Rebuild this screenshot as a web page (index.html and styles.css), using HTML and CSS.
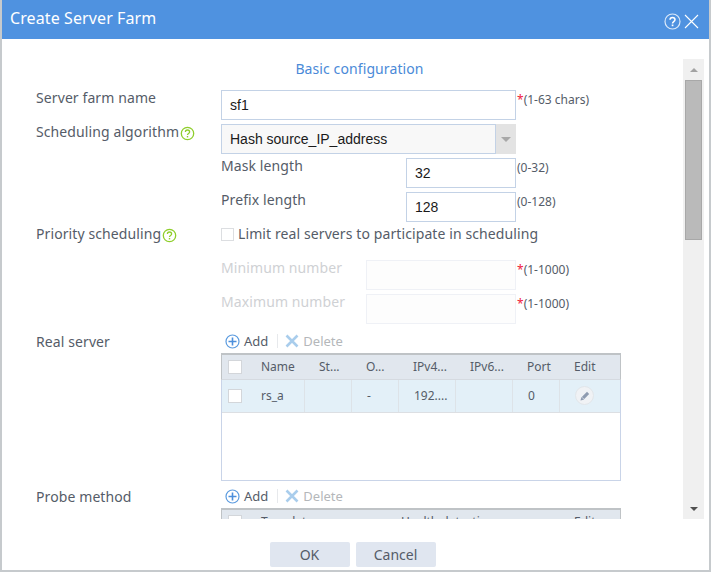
FILE: index.html
```html
<!DOCTYPE html>
<html lang="en">
<head>
<meta charset="utf-8">
<title>Create Server Farm</title>
<link rel="stylesheet" href="styles.css">
</head>
<body>
<div class="dialog">
  <header class="titlebar">
    <h1 class="title">Create Server Farm</h1>
    <div class="title-icons">
      <svg width="17" height="17" viewBox="0 0 17 17"><circle cx="8.5" cy="8.5" r="7.5" fill="none" stroke="#dbe9f9" stroke-width="1.2"/><path d="M6 6.8c0-3.2 5-3.2 5 0 0 1.900-2.500 1.900-2.500 3.800" fill="none" stroke="#fff" stroke-width="1.5"/><rect x="7.700" y="11.500" width="1.700" height="1.700" fill="#fff"/></svg>
      <svg width="15" height="15" viewBox="0 0 15 15"><path d="M1 1l13 13M14 1L1 14" stroke="#fff" stroke-width="1.1"/></svg>
    </div>
  </header>
  <div class="content">
    <div class="form">
      <div class="section">Basic configuration</div>
      <div class="row">
        <div class="label">Server farm name</div>
        <div class="input">sf1</div><div class="hint"><span class="req">*</span>(1-63 chars)</div>
      </div>
      <div class="row">
        <div class="label">Scheduling algorithm<svg class="help" width="15" height="15" viewBox="0 0 15 15"><circle cx="7.5" cy="7.5" r="6.2" fill="none" stroke="#8fce2c" stroke-width="1.3"/><path d="M5.4 6c0-2.700 4.200-2.700 4.200 0 0 1.600-2.100 1.500-2.100 3.100" fill="none" stroke="#8fce2c" stroke-width="1.300"/><rect x="6.800" y="10" width="1.400" height="1.400" fill="#8fce2c"/></svg></div>
        <div class="select"><div class="select-value">Hash source_IP_address</div><div class="select-btn"><span class="caret"></span></div></div>
      </div>
      <div class="row">
        <div class="sublabel sublabel-wide">Mask length</div>
        <div class="input narrow">32</div><div class="hint">(0-32)</div>
      </div>
      <div class="row">
        <div class="sublabel sublabel-wide">Prefix length</div>
        <div class="input narrow">128</div><div class="hint">(0-128)</div>
      </div>
      <div class="row">
        <div class="label">Priority scheduling<svg class="help" width="15" height="15" viewBox="0 0 15 15"><circle cx="7.5" cy="7.5" r="6.2" fill="none" stroke="#8fce2c" stroke-width="1.3"/><path d="M5.4 6c0-2.700 4.200-2.700 4.200 0 0 1.600-2.100 1.500-2.100 3.100" fill="none" stroke="#8fce2c" stroke-width="1.300"/><rect x="6.800" y="10" width="1.400" height="1.400" fill="#8fce2c"/></svg></div>
        <div class="check-line"><span class="check check-off"></span>Limit real servers to participate in scheduling</div>
      </div>
      <div class="row">
        <div class="sublabel sublabel-off">Minimum number</div>
        <div class="input disabled"></div><div class="hint"><span class="req">*</span>(1-1000)</div>
      </div>
      <div class="row">
        <div class="sublabel sublabel-off">Maximum number</div>
        <div class="input disabled"></div><div class="hint"><span class="req">*</span>(1-1000)</div>
      </div>
      <div class="block block-first">
        <div class="label block-label">Real server</div>
        <div class="block-main">
          <div class="toolbar">
            <span class="tool"><svg width="15" height="15" viewBox="0 0 15 15"><circle cx="7.500" cy="7.500" r="6.500" fill="none" stroke="#5b9bdf" stroke-width="1.200"/><path d="M7.500 3.500v8M3.500 7.500h8" stroke="#4c8fdc" stroke-width="1.600"/></svg>Add</span>
            <span class="tool-sep"></span>
            <span class="tool tool-off"><svg width="14" height="14" viewBox="0 0 14 14"><path d="M1.500 1.500l11 11M12.500 1.500l-11 11" stroke="#a9cdec" stroke-width="2.600"/></svg>Delete</span>
          </div>
          <div class="grid grid-tall">
            <div class="grid-row grid-head">
              <div class="cell cell-check"><span class="check"></span></div>
              <div class="cell">Name</div><div class="cell">St...</div><div class="cell">O...</div><div class="cell">IPv4...</div><div class="cell">IPv6...</div><div class="cell">Port</div><div class="cell">Edit</div>
            </div>
            <div class="grid-row grid-data">
              <div class="cell cell-check"><span class="check"></span></div>
              <div class="cell">rs_a</div><div class="cell sep"></div><div class="cell sep">-</div><div class="cell sep">192....</div><div class="cell sep"></div><div class="cell sep">0</div>
              <div class="cell sep"><span class="edit"><svg width="12" height="12" viewBox="0 0 12 12"><path d="M1.500 10.500l.8-3L8 1.800l2.200 2.200-5.700 5.700z" fill="#8e9bb0"/><path d="M3 7.300l1.800 1.800" stroke="#e9eef4" stroke-width=".8"/></svg></span></div>
            </div>
          </div>
        </div>
      </div>
      <div class="block">
        <div class="label block-label">Probe method</div>
        <div class="block-main">
          <div class="toolbar">
            <span class="tool"><svg width="15" height="15" viewBox="0 0 15 15"><circle cx="7.500" cy="7.500" r="6.500" fill="none" stroke="#5b9bdf" stroke-width="1.200"/><path d="M7.500 3.500v8M3.500 7.500h8" stroke="#4c8fdc" stroke-width="1.600"/></svg>Add</span>
            <span class="tool-sep"></span>
            <span class="tool tool-off"><svg width="14" height="14" viewBox="0 0 14 14"><path d="M1.500 1.500l11 11M12.500 1.500l-11 11" stroke="#a9cdec" stroke-width="2.600"/></svg>Delete</span>
          </div>
          <div class="grid">
            <div class="grid-row grid-head grid-head2">
              <div class="cell cell-check"><span class="check"></span></div>
              <div class="cell">Template</div><div class="cell">Health detection</div><div class="cell">Edit</div>
            </div>
          </div>
        </div>
      </div>
    </div>
    <div class="scrollbar">
      <div class="arrow arrow-up"></div>
      <div class="thumb"></div>
      <div class="track"></div>
      <div class="arrow arrow-down"></div>
    </div>
  </div>
  <footer class="footer">
    <button class="btn">OK</button>
    <button class="btn">Cancel</button>
  </footer>
</div>
</body>
</html>
```

FILE: styles.css
```css
* { box-sizing: border-box; }
html, body { margin: 0; height: 100%; background: #fff; }
body { font-family: "Noto Sans", "Open Sans", sans-serif; font-size: 14px; letter-spacing: .1px; color: #555c68; overflow: hidden; }

.dialog { width: 711px; height: 572px; display: flex; flex-direction: column; border-left: 2px solid #c6cacd; border-right: 2px solid #c6cacd; border-bottom: 2px solid #c6cacd; }

.titlebar { height: 39px; background: #4f92e0; display: flex; align-items: center; justify-content: space-between; padding: 0 10px 3px 8px; flex: none; }
.title { margin: 0; font-size: 16px; font-weight: 400; color: #fff; line-height: 36px; height: 36px; }
.title-icons { display: flex; align-items: center; gap: 3px; margin-top: 6px; }
.title-icons svg { display: block; }

.content { height: 480px; padding-top: 20px; display: flex; flex: none; }
.form { width: 681px; height: 460px; overflow: hidden; padding-left: 34px; flex: none; }
.section { height: 31px; width: 647px; text-align: center; color: #4a8ad8; line-height: 20px; }

.row { height: 34px; display: flex; align-items: flex-start; }
.label { width: 185px; flex: none; line-height: 16px; display: flex; align-items: flex-start; }
.help { margin-left: 1px; margin-top: 2px; flex: none; }
.sublabel { width: 330px; padding-left: 185px; line-height: 16px; flex: none; white-space: nowrap; }
.sublabel-wide { width: 370px; }
.sublabel-off { color: #cfd1d4; }

.input, .select-value { font-family: "Liberation Sans", Arial, sans-serif; font-size: 14px; letter-spacing: 0; color: #1a1a1a; }
.input { width: 295px; height: 30px; border: 1px solid #c3d2e6; background: #fff; line-height: 29px; padding-left: 8px; flex: none; }
.narrow { width: 110px; }
.disabled { width: 150px; background: #fdfdfd; border-color: #eff1f6; }
.hint { font-size: 12px; letter-spacing: 0; margin-left: 1px; line-height: 16px; margin-top: 2px; white-space: nowrap; }
.req { color: #f0203c; }

.select { width: 295px; height: 30px; display: flex; flex: none; }
.select-value { width: 275px; border: 1px solid #c3d2e6; background: #f8f8f8; line-height: 28px; padding-left: 8px; }
.select-btn { width: 20px; background: #e3e3e3; display: flex; align-items: center; justify-content: center; }
.caret { width: 0; height: 0; border-left: 5px solid transparent; border-right: 5px solid transparent; border-top: 5px solid #a8a8a8; }

.check-line { display: flex; align-items: flex-start; line-height: 16px; white-space: nowrap; }
.check { display: inline-block; width: 14px; height: 14px; background: #fff; border: 1px solid #d3d6da; flex: none; }
.check-off { width: 13px; height: 13px; margin: 2px 4px 0 0; border-color: #dcdee1; }

.block { display: flex; align-items: flex-start; margin-top: 3px; }
.block-first { margin-top: 1px; }
.block-label { margin-top: 5px; }
.block-main { width: 400px; flex: none; }

.toolbar { height: 24px; display: flex; align-items: center; padding-left: 4px; font-size: 13px; letter-spacing: 0; line-height: 18px; }
.tool { display: inline-flex; align-items: center; gap: 4px; }
.tool-off { color: #b4b7ba; }
.tool-sep { width: 1px; height: 14px; background: #e7e9ec; margin: 0 7px 0 9px; }

.grid { border-left: 1px solid #c9d4e8; border-right: 1px solid #c9d4e8; border-bottom: 1px solid #c9d4e8; }
.grid-tall { height: 128px; }
.grid-row { display: grid; grid-template-columns: 24px 58px 47px 47px 57px 57px 47px 60px; font-size: 12px; letter-spacing: 0; }
.grid-head { height: 27px; background: #e1e7ee; border-top: 2px solid #bfc3c6; border-bottom: 1px solid #d5dae0; border-right: 1px solid #bfc3c6; margin: 0 -1px; border-left: 1px solid #bfc3c6; }
.grid-head .cell { line-height: 24px; }
.grid-head2 { grid-template-columns: 24px 140px 173px 60px; }
.grid-data { height: 33px; background: #e3f0f8; border-bottom: 1px solid #dcdfe3; }
.grid-data .cell { line-height: 32px; }
.cell { padding-left: 15px; white-space: nowrap; overflow: hidden; }
.cell-check { padding-left: 6px; display: flex; align-items: center; }
.sep { border-left: 1px solid #dde3e8; }
.edit { display: flex; width: 19px; height: 19px; border-radius: 50%; background: #f0f2f5; border: 1px solid #e2e6ea; align-items: center; justify-content: center; margin-top: 6px; }
.edit svg { display: block; }

.scrollbar { width: 21px; height: 460px; background: #f0f0f0; display: flex; flex-direction: column; align-items: center; flex: none; }
.arrow { width: 100%; height: 21px; display: flex; align-items: center; justify-content: center; flex: none; }
.arrow::before { content: ""; width: 0; height: 0; border-left: 4px solid transparent; border-right: 4px solid transparent; }
.arrow-up::before { border-bottom: 4px solid #a3a3a3; }
.arrow-down::before { border-top: 4px solid #505050; }
.thumb { width: 17px; height: 160px; background: #bababa; border: 1px solid #a8a8a8; flex: none; }
.track { flex: 1; }

.footer { flex: 1; display: flex; align-items: flex-start; justify-content: center; gap: 6px; padding: 23px 6px 0 0; }
.btn { width: 80px; height: 25px; border: 0; border-radius: 2px; background: #e0e6f0; font: 14px "Noto Sans", "Open Sans", sans-serif; color: #555c68; padding: 0; }
```
